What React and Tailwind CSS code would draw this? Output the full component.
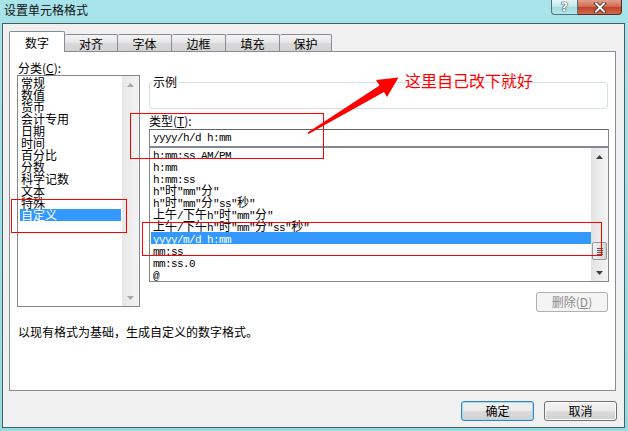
import React from "react";

function Mixed({ text }) {
  const parts = [];
  let cur = "";
  let curCjk = null;
  for (const ch of text) {
    const isCjk = ch.charCodeAt(0) > 0x2e80;
    if (curCjk === null || isCjk === curCjk) {
      cur += ch;
      curCjk = isCjk;
    } else {
      parts.push([curCjk, cur]);
      cur = ch;
      curCjk = isCjk;
    }
  }
  if (cur) parts.push([curCjk, cur]);
  return parts.map(([c, s], i) =>
    c ? (
      <span key={i} className="font-['Noto_Sans_CJK_SC',sans-serif] text-[12px] leading-[12px]">
        {s}
      </span>
    ) : (
      <span key={i} className="font-['Liberation_Mono',monospace] text-[11px] leading-[12px] tracking-[-0.6px]">
        {s}
      </span>
    )
  );
}

function Arrow({ up, color }) {
  return (
    <svg width="7" height="4" viewBox="0 0 7 4">
      {up ? <polygon points="0,4 7,4 3.5,0" fill={color} /> : <polygon points="0,0 7,0 3.5,4" fill={color} />}
    </svg>
  );
}

const categories = ["常规", "数值", "货币", "会计专用", "日期", "时间", "百分比", "分数", "科学记数", "文本", "特殊", "自定义"];
const formats = [
  "h:mm:ss AM/PM",
  "h:mm",
  "h:mm:ss",
  'h"时"mm"分"',
  'h"时"mm"分"ss"秒"',
  '上午/下午h"时"mm"分"',
  '上午/下午h"时"mm"分"ss"秒"',
  "yyyy/m/d h:mm",
  "mm:ss",
  "mm:ss.0",
  "@",
];

const tabs = [
  ["对齐", "w-[53px]"],
  ["字体", "w-[54px]"],
  ["边框", "w-[54px]"],
  ["填充", "w-[54px]"],
  ["保护", "w-[52px]"],
];

export default function App() {
  return (
    <div className="w-[628px] h-[431px] relative overflow-hidden bg-[linear-gradient(180deg,#a8e4e9,#92dbe0)] font-['Noto_Sans_CJK_SC',sans-serif] text-[12px] text-black">
      {/* title bar */}
      <div className="h-[23px] flex items-start">
        <div className="pl-[4px] pt-[3px] leading-[14px] text-[12px] text-[#111]">设置单元格格式</div>
        <div className="ml-auto mr-[6px] flex">
          <div className="w-[27px] h-[15px] border border-[#4f7178] border-t-0 rounded-bl-[4px] bg-[linear-gradient(180deg,#e4f6f7,#bfe7ea_50%,#a4dade_50%,#b6e6ea)] flex items-center justify-center">
            <span className="text-[12px] leading-[12px] font-bold text-white font-['DejaVu_Sans',sans-serif] [text-shadow:0_0_1px_#2b3a40,0_0_1px_#2b3a40,0_0_1px_#2b3a40]">?</span>
          </div>
          <div className="w-[44px] h-[15px] border border-[#5a2a20] border-t-0 border-l-0 rounded-br-[4px] bg-[linear-gradient(180deg,#e2a190,#d0674f_50%,#c0412b_50%,#d06a4a)] flex items-center justify-center">
            <svg width="14" height="11" viewBox="0 0 14 11">
              <path d="M3 1.5 L11 9.5 M11 1.5 L3 9.5" stroke="#3b2420" strokeWidth="3.6" strokeLinecap="square" />
              <path d="M3 1.5 L11 9.5 M11 1.5 L3 9.5" stroke="#ffffff" strokeWidth="2" strokeLinecap="square" />
            </svg>
          </div>
        </div>
      </div>

      {/* client area */}
      <div className="ml-[2px] w-[623px] h-[405px] border border-[#4a5d62] bg-[#f0f0f0]">
        {/* tabs */}
        <div className="pl-[6px] pt-[7px] h-[27px] flex items-end">
          <div className="relative z-10 w-[56px] h-[21px] mb-[-1px] bg-white border border-b-0 border-[#898c95] rounded-t-[2px] flex items-center justify-center leading-[14px] pt-[2px]">
            数字
          </div>
          {tabs.map(([t, w]) => (
            <div
              key={t}
              className={`${w} h-[17px] border-t border-r border-[#898c95] rounded-t-[2px] bg-[linear-gradient(180deg,#f4f4f4,#e6e6e6_50%,#d9d9d9_51%,#d2d2d2)] flex items-center justify-center leading-[14px] pt-[1px]`}
            >
              {t}
            </div>
          ))}
        </div>

        {/* panel */}
        <div className="ml-[6px] w-[607px] h-[340px] border border-[#898c95] bg-white">
          <div className="pl-[7px] pt-[8px] flex items-start">
            {/* left column */}
            <div className="w-[123px]">
              <div className="h-[15px] leading-[15px] pl-[1px]">
                分类(<span className="underline">C</span>):
              </div>
              <div className="h-[232px] border border-[#828790] flex">
                <div className="w-[101px] ml-[2px] pt-[1px]">
                  {categories.map((c) => (
                    <div
                      key={c}
                      className={`h-[12px] leading-[12px] pl-[1px] whitespace-nowrap ${c === "自定义" ? "bg-[#3399ff] text-white" : ""}`}
                    >
                      {c}
                    </div>
                  ))}
                </div>
                <div className="ml-[1px] w-[17px] h-full bg-[linear-gradient(90deg,#e7e7e7,#f3f3f3)] flex flex-col justify-between">
                  <div className="h-[17px] flex items-center justify-center">
                    <Arrow up color="#a8a8a8" />
                  </div>
                  <div className="h-[17px] flex items-center justify-center">
                    <Arrow color="#a8a8a8" />
                  </div>
                </div>
              </div>
            </div>

            {/* right column */}
            <div className="ml-[9px] w-[460px] flex flex-col">
              <div className="relative mt-[22px] w-[459px] h-[27px] border border-[#d5dfe5] rounded-[3px]">
                <div className="absolute top-[-8px] left-[2px] px-[1px] bg-white leading-[14px]">示例</div>
              </div>
              <div className="mt-[3px] h-[17px] leading-[17px]">
                类型(<span className="underline">T</span>):
              </div>
              <div className="h-[18px] border border-[#828790] border-t-[#5f6468] pl-[3px] flex items-center whitespace-nowrap">
                <Mixed text="yyyy/h/d h:mm" />
              </div>
              <div className="h-[135px] border border-[#828790] flex">
                <div className="w-[440px] ml-[1px]">
                  {formats.map((f) => (
                    <div
                      key={f}
                      className={`h-[12px] leading-[12px] pl-[2px] whitespace-nowrap overflow-visible ${f === "yyyy/m/d h:mm" ? "bg-[#3399ff] text-white" : ""}`}
                    >
                      <Mixed text={f} />
                    </div>
                  ))}
                </div>
                <div className="w-[17px] h-full bg-[linear-gradient(90deg,#e3e3e3,#f4f4f4)] flex flex-col">
                  <div className="h-[17px] flex items-center justify-center">
                    <Arrow up color="#404040" />
                  </div>
                  <div className="h-[77px]" />
                  <div className="h-[18px] mx-[1px] border border-[#979797] rounded-[2px] bg-[linear-gradient(90deg,#f3f3f3,#e4e4e4_50%,#d4d4d4)] flex flex-col items-center justify-center gap-[1px]">
                    <div className="w-[6px] h-[1px] bg-[#555]" />
                    <div className="w-[6px] h-[1px] bg-[#555]" />
                    <div className="w-[6px] h-[1px] bg-[#555]" />
                    <div className="w-[6px] h-[1px] bg-[#555]" />
                  </div>
                  <div className="h-[4px]" />
                  <div className="h-[17px] flex items-center justify-center">
                    <Arrow color="#404040" />
                  </div>
                </div>
              </div>
              <div className="mt-[10px] self-end mr-[1px] w-[72px] h-[20px] border border-[#adb2b5] rounded-[3px] bg-[#f4f4f4] text-[#8b8b8b] flex items-center justify-center leading-[14px]">
                删除(<span className="underline">D</span>)
              </div>
            </div>
          </div>
          <div className="pl-[8px] mt-[12px] leading-[16px]">以现有格式为基础，生成自定义的数字格式。</div>
        </div>

        {/* buttons */}
        <div className="mt-[10px] pr-[7px] flex justify-end gap-[10px]">
          <div className="w-[73px] h-[20px] border border-[#3c7fb1] rounded-[3px] bg-[linear-gradient(180deg,#f2f2f2,#ebebeb_50%,#dddddd_50%,#cfcfcf)] shadow-[inset_0_0_0_1px_#9fdcf7] flex items-center justify-center leading-[14px]">
            确定
          </div>
          <div className="w-[73px] h-[20px] border border-[#707070] rounded-[3px] bg-[linear-gradient(180deg,#f2f2f2,#ebebeb_50%,#dddddd_50%,#cfcfcf)] shadow-[inset_0_0_0_1px_#fcfcfc] flex items-center justify-center leading-[14px]">
            取消
          </div>
        </div>
      </div>

      {/* red annotations */}
      <div className="absolute left-[11px] top-[199px] w-[116px] h-[34px] border border-[#ff0000] pointer-events-none" />
      <div className="absolute left-[130px] top-[113px] w-[194px] h-[46px] border border-[#ff0000] pointer-events-none" />
      <div className="absolute left-[142px] top-[222px] w-[460px] h-[34px] border border-[#ff0000] pointer-events-none" />
      <svg className="absolute left-0 top-0 pointer-events-none" width="628" height="431" viewBox="0 0 628 431">
        <polygon
          points="307.6,132.6 308.6,134 384,92 387,97 398.5,77.5 376,80 379.5,85.5"
          fill="#ff0000"
        />
      </svg>
      <div className="absolute left-[405px] top-[72px] text-[16px] leading-[16px] text-[#ff0000] whitespace-nowrap">这里自己改下就好</div>
    </div>
  );
}
